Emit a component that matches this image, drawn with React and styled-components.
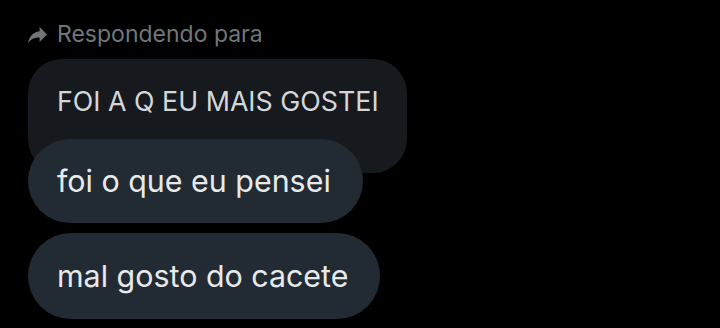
import React from "react";
import styled, { createGlobalStyle } from "styled-components";

const GlobalStyle = createGlobalStyle`
*{
  margin:0;
  padding:0;
  box-sizing:border-box;
}
body{
  background:#000;
  font-family: Inter, Roboto, Arial, sans-serif;
}
`;

const Page = styled.div`
  width: 720px;
  height: 328px;
  background: #000;
  padding: 21px 0 0 28px;
  display: flex;
  flex-direction: column;
  align-items: flex-start;
`;

const ReplyHeader = styled.div`
  display: flex;
  align-items: center;
  gap: 10px;
  height: 26px;
  color: #71767b;
  font-size: 23px;
`;

const Quoted = styled.div`
  margin-top: 12px;
  width: 379px;
  height: 114px;
  background: #16191d;
  border-radius: 34px;
  padding: 28px 0 0 29px;
  color: #d3d7da;
  font-size: 26.8px;
  line-height: 28px;
`;

const Bubble = styled.div`
  margin-top: ${(p) => p.$gap}px;
  height: ${(p) => p.$h}px;
  display: flex;
  align-items: center;
  padding: 0 32px 0 29px;
  background: #222b33;
  border-radius: 43px;
  color: #e7e9ea;
  font-size: 30.4px;
`;

const ReplyIcon = () => (
  <svg width="19" height="17" viewBox="3 4 18 16" style={{ transform: "scaleX(-1)" }}>
    <path fill="#71767b" d="M10 9V5l-7 7 7 7v-4.1c5 0 8.5 1.6 11 5.1-1-5-4-10-11-11z" />
  </svg>
);

export default function App() {
  return (
    <Page>
      <GlobalStyle />
      <ReplyHeader>
        <ReplyIcon />
        Respondendo para
      </ReplyHeader>
      <Quoted>FOI A Q EU MAIS GOSTEI</Quoted>
      <Bubble $gap={-34} $h={84}>foi o que eu pensei</Bubble>
      <Bubble $gap={10} $h={86}>mal gosto do cacete</Bubble>
    </Page>
  );
}
